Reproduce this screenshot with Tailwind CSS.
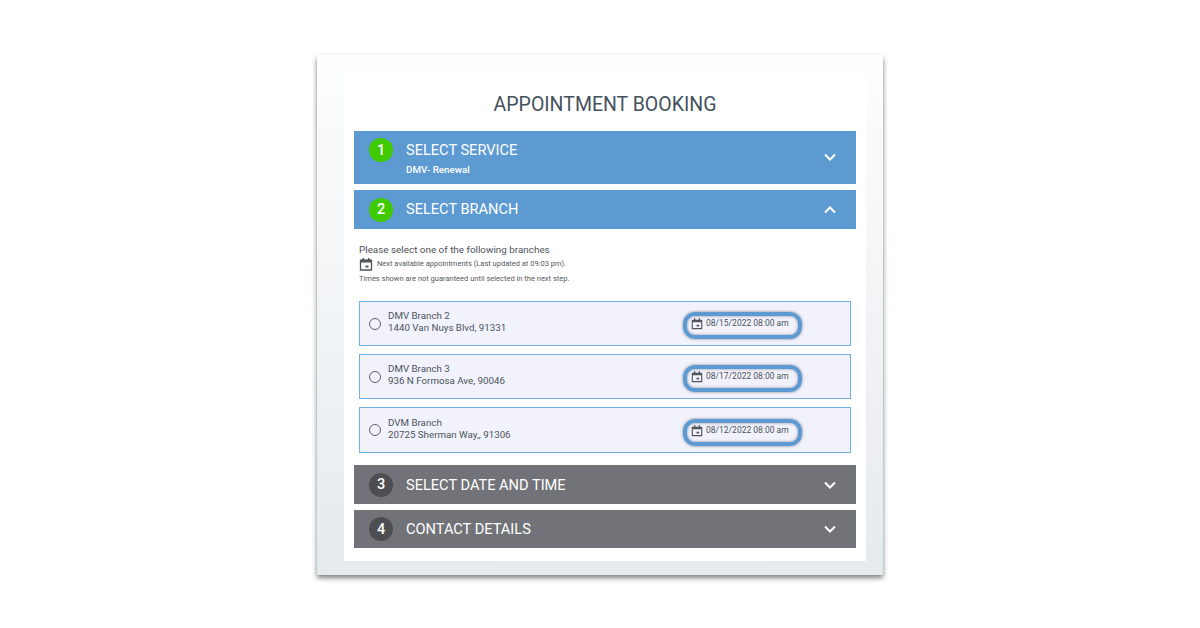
<!DOCTYPE html>
<html lang="en">
<head>
    <meta charset="UTF-8">
    <meta name="viewport" content="width=device-width, initial-scale=1.0">
    <title>Appointment Booking</title>
    <script src="https://cdn.jsdelivr.net/npm/@tailwindcss/browser@4"></script>
</head>
<body class="bg-white font-['Roboto',sans-serif] w-[1200px] h-[628px] overflow-hidden">
    <div class="w-[566px] h-[520px] mt-[55px] mx-auto pt-[13px] pl-[27px] bg-gradient-to-b from-[#fdfefe] to-[#e5eaed] shadow-[0_3px_5px_rgba(0,0,0,0.5)]">
        <div class="w-[522px] h-[493px] bg-white px-[10px]">
            <h1 class="h-[63px] pt-[23px] text-center text-[19.5px] leading-[28px] text-[#44525c]">APPOINTMENT BOOKING</h1>

            <!-- step 1 -->
            <div class="h-[53px] bg-[#5c9ad1] flex items-start pl-[15px] pr-[20px] text-white">
                <span class="w-[24px] h-[24px] mt-[7px] pt-[1px] rounded-full bg-[#3fcb00] flex items-center justify-center text-[14.5px] font-medium">1</span>
                <div class="ml-[13px] flex-1">
                    <div class="mt-[9px] text-[14.6px] leading-[20px]">SELECT SERVICE</div>
                    <div class="mt-[3px] text-[9.8px] leading-[14px] font-medium">DMV- Renewal</div>
                </div>
                <svg class="w-[12px] h-[8px] mt-[22px]" viewBox="0 0 12 8" fill="none" stroke="white" stroke-width="2"><path d="M1 1.5l5 5 5-5"/></svg>
            </div>

            <!-- step 2 -->
            <div class="h-[39px] mt-[6px] bg-[#5c9ad1] flex items-center pl-[15px] pr-[20px] text-white">
                <span class="w-[24px] h-[24px] rounded-full bg-[#3fcb00] flex items-center justify-center text-[14.5px] font-medium">2</span>
                <div class="ml-[13px] flex-1 text-[14.6px]">SELECT BRANCH</div>
                <svg class="w-[12px] h-[8px]" viewBox="0 0 12 8" fill="none" stroke="white" stroke-width="2"><path d="M1 6.5l5-5 5 5"/></svg>
            </div>

            <div class="pt-[14px] pl-[5px] pr-[5px] h-[236px]">
                <p class="text-[9.9px] leading-[14px] text-[#4b5258]">Please select one of the following branches</p>
                <div class="flex items-center h-[14px]">
                    <svg class="w-[14px] h-[14px] text-[#50555a]" viewBox="0 0 14 14" fill="none"><path d="M1.5 3.5h11v9.5h-11z" stroke="currentColor" stroke-width="1.3"/><path d="M1.5 2.5h11v3h-11zM3.5 1h1.5v2h-1.5zM9 1h1.5v2h-1.5zM6.5 8.5h3v2h-3z" fill="currentColor"/></svg>
                    <span class="ml-[4px] text-[7.5px] text-[#565a5e]">Next available appointments (Last updated at 09:03 pm).</span>
                </div>
                <p class="mt-[2px] text-[7.5px] leading-[12px] text-[#565a5e]">Times shown are not guaranteed until selected in the next step.</p>

                <div class="mt-[16px] h-[45px] w-[492px] border border-[#6eb0e0] bg-[#f2f2fd] flex items-center pl-[9px]">
                    <span class="w-[12px] h-[12px] rounded-full border-[1.3px] border-[#5d6268]"></span>
                    <div class="ml-[7px] mb-[3px] w-[295px] text-[9.75px] leading-[12px] text-[#4b5258]"><div>DMV Branch 2</div><div>1440 Van Nuys Blvd, 91331</div></div>
                    <div class="w-[119px] h-[27px] mt-[4px] rounded-[12px] border-[4px] border-[#5c9ad1] shadow-[0_0_3px_rgba(50,50,70,0.6),inset_0_0_3px_rgba(50,50,70,0.5)] flex items-start pl-[4px] pt-[1px]">
                        <svg class="w-[12px] h-[13px] text-[#50555a]" viewBox="0 0 14 14" fill="none"><path d="M1.5 3.5h11v9.5h-11z" stroke="currentColor" stroke-width="1.3"/><path d="M1.5 2.5h11v3h-11zM3.5 1h1.5v2h-1.5zM9 1h1.5v2h-1.5zM6.5 8.5h3v2h-3z" fill="currentColor"/></svg>
                        <span class="ml-[3px] text-[8.5px] leading-[12px] text-[#4b5258]">08/15/2022 08:00 am</span>
                    </div>
                </div>

                <div class="mt-[8px] h-[45px] w-[492px] border border-[#6eb0e0] bg-[#f2f2fd] flex items-center pl-[9px]">
                    <span class="w-[12px] h-[12px] rounded-full border-[1.3px] border-[#5d6268]"></span>
                    <div class="ml-[7px] mb-[3px] w-[295px] text-[9.75px] leading-[12px] text-[#4b5258]"><div>DMV Branch 3</div><div>936 N Formosa Ave, 90046</div></div>
                    <div class="w-[119px] h-[27px] mt-[4px] rounded-[12px] border-[4px] border-[#5c9ad1] shadow-[0_0_3px_rgba(50,50,70,0.6),inset_0_0_3px_rgba(50,50,70,0.5)] flex items-start pl-[4px] pt-[1px]">
                        <svg class="w-[12px] h-[13px] text-[#50555a]" viewBox="0 0 14 14" fill="none"><path d="M1.5 3.5h11v9.5h-11z" stroke="currentColor" stroke-width="1.3"/><path d="M1.5 2.5h11v3h-11zM3.5 1h1.5v2h-1.5zM9 1h1.5v2h-1.5zM6.5 8.5h3v2h-3z" fill="currentColor"/></svg>
                        <span class="ml-[3px] text-[8.5px] leading-[12px] text-[#4b5258]">08/17/2022 08:00 am</span>
                    </div>
                </div>

                <div class="mt-[8px] h-[46px] w-[492px] border border-[#6eb0e0] bg-[#f2f2fd] flex items-center pl-[9px]">
                    <span class="w-[12px] h-[12px] rounded-full border-[1.3px] border-[#5d6268]"></span>
                    <div class="ml-[7px] mb-[3px] w-[295px] text-[9.75px] leading-[12px] text-[#4b5258]"><div>DVM Branch</div><div>20725 Sherman Way,, 91306</div></div>
                    <div class="w-[119px] h-[27px] mt-[4px] rounded-[12px] border-[4px] border-[#5c9ad1] shadow-[0_0_3px_rgba(50,50,70,0.6),inset_0_0_3px_rgba(50,50,70,0.5)] flex items-start pl-[4px] pt-[1px]">
                        <svg class="w-[12px] h-[13px] text-[#50555a]" viewBox="0 0 14 14" fill="none"><path d="M1.5 3.5h11v9.5h-11z" stroke="currentColor" stroke-width="1.3"/><path d="M1.5 2.5h11v3h-11zM3.5 1h1.5v2h-1.5zM9 1h1.5v2h-1.5zM6.5 8.5h3v2h-3z" fill="currentColor"/></svg>
                        <span class="ml-[3px] text-[8.5px] leading-[12px] text-[#4b5258]">08/12/2022 08:00 am</span>
                    </div>
                </div>
            </div>

            <!-- step 3 -->
            <div class="h-[39px] bg-[#727378] flex items-center pl-[15px] pr-[20px] text-white">
                <span class="w-[24px] h-[24px] pt-[1px] rounded-full bg-[#4d4e52] flex items-center justify-center text-[14.5px] font-medium">3</span>
                <div class="ml-[13px] pt-[2px] flex-1 text-[14.6px]">SELECT DATE AND TIME</div>
                <svg class="w-[12px] h-[8px]" viewBox="0 0 12 8" fill="none" stroke="white" stroke-width="2"><path d="M1 1.5l5 5 5-5"/></svg>
            </div>

            <!-- step 4 -->
            <div class="h-[38px] mt-[6px] bg-[#727378] flex items-center pl-[15px] pr-[20px] text-white">
                <span class="w-[24px] h-[24px] pt-[1px] rounded-full bg-[#4d4e52] flex items-center justify-center text-[14.5px] font-medium">4</span>
                <div class="ml-[13px] pt-[1px] flex-1 text-[14.6px]">CONTACT DETAILS</div>
                <svg class="w-[12px] h-[8px]" viewBox="0 0 12 8" fill="none" stroke="white" stroke-width="2"><path d="M1 1.5l5 5 5-5"/></svg>
            </div>
        </div>
    </div>
</body>
</html>
